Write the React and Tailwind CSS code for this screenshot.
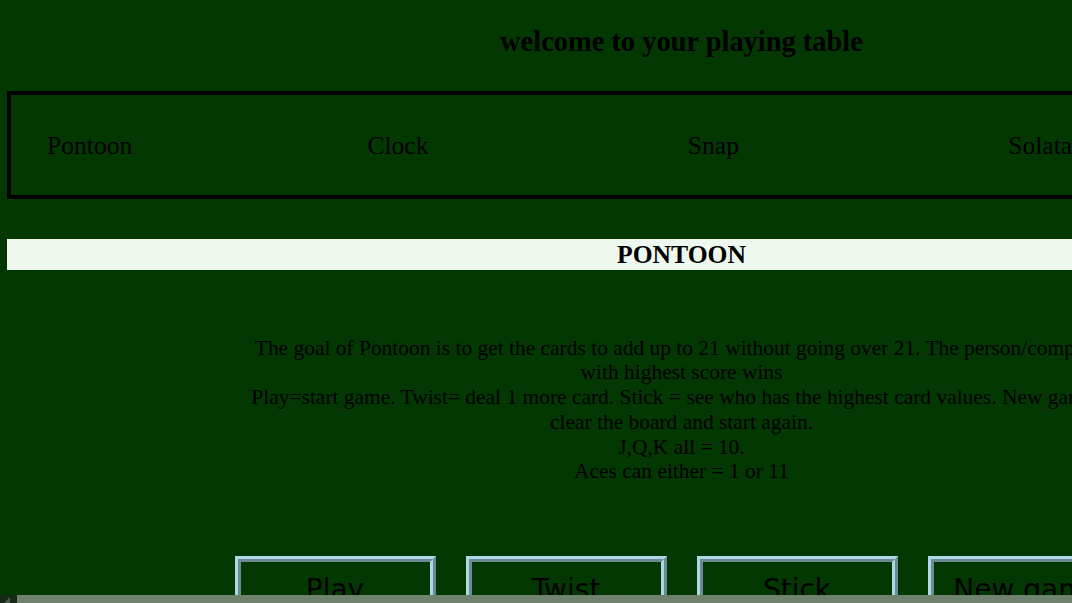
import React from 'react';

const games = ['Pontoon', 'Clock', 'Snap', 'Solataire'];
const buttons = ['Play', 'Twist', 'Stick', 'New game'];

const rules = [
  'The goal of Pontoon is to get the cards to add up to 21 without going over 21. The person/computer',
  'with highest score wins',
  'Play=start game. Twist= deal 1 more card. Stick = see who has the highest card values. New game =',
  'clear the board and start again.',
  'J,Q,K all = 10.',
  'Aces can either = 1 or 11',
];

function App() {
  return (
    <div className="w-[1072px] h-[603px] overflow-hidden flex flex-col bg-[#033803] text-black font-['Liberation_Serif',serif]">
      {/* Page */}
      <div className="h-[595px] overflow-hidden">
        <div className="w-[1363px] px-[7px]">
          <h1 className="h-[91px] pt-[26px] text-center font-bold text-[28.44px] leading-[32.7px]">
            welcome to your playing table
          </h1>

          {/* Game menu */}
          <nav className="h-[108px] border-[4px] border-black flex items-center pl-[36px] pt-[2px]">
            {games.map((g) => (
              <div key={g} className="w-[320.4px] shrink-0 text-[25.6px] leading-[29.4px]">
                {g}
              </div>
            ))}
          </nav>

          {/* Title band */}
          <div className="mt-[40px] h-[31px] bg-[#eef8ee] flex items-center justify-center">
            <h2 className="font-bold text-[25.6px] leading-[29.4px]">PONTOON</h2>
          </div>

          {/* Rules */}
          <div className="mt-[65.5px] text-center text-[21.45px] leading-[24.8px]">
            {rules.map((line) => (
              <p key={line} className="whitespace-nowrap">{line}</p>
            ))}
          </div>

          {/* Controls */}
          <div className="mt-[72px] flex justify-center gap-[30px]">
            {buttons.map((b) => (
              <button
                key={b}
                className="w-[201px] h-[68px] shrink-0 border-[6px] [border-style:ridge] border-[#add8e6] bg-transparent text-black font-['DejaVu_Sans',sans-serif] text-[28px] leading-[32.6px]"
              >
                {b}
              </button>
            ))}
          </div>
        </div>
      </div>

      {/* Horizontal scrollbar */}
      <div className="h-[8px] flex">
        <div className="w-[17px] h-full bg-[#172817]">
          <svg width="17" height="8" viewBox="0 0 17 8">
            <polygon points="4,8 10,2 10,8" fill="#4a5c4a" />
          </svg>
        </div>
        <div className="flex-1 h-full bg-[#6e826e]" />
      </div>
    </div>
  );
}

export default App;
